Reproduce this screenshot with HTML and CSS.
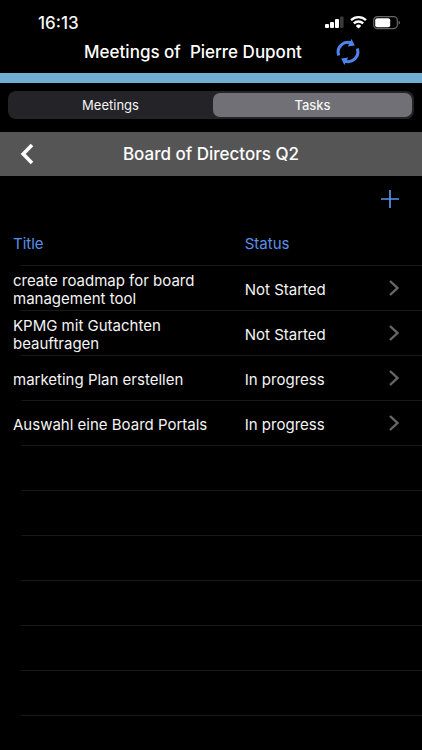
FILE: index.html
```html
<!DOCTYPE html>
<html lang="en">
<head>
<meta charset="utf-8">
<meta name="viewport" content="width=device-width, initial-scale=1">
<title>Meetings of Pierre Dupont</title>
<link rel="stylesheet" href="styles.css">
</head>
<body>
<div class="app">
  <div class="status-bar">
    <span class="clock">16:13</span>
    <div class="indicators">
      <svg width="19" height="14" viewBox="0 0 19 14" aria-hidden="true">
        <g fill="#fff"><rect x="0" y="8" width="4" height="4" rx="1"/><rect x="5" y="6" width="4" height="6" rx="1"/><rect x="10" y="3" width="4" height="9" rx="1"/></g>
        <rect x="15" y="0.5" width="3.6" height="11.5" rx="1" fill="#3a3a3a"/>
      </svg>
      <svg width="17" height="14" viewBox="0 0 17 14" aria-hidden="true">
        <g fill="none" stroke="#fff" stroke-width="2.3"><path d="M1 4.2A10.8 10.8 0 0 1 16 4.2"/><path d="M3.8 7.4A6.8 6.8 0 0 1 13.2 7.4"/></g>
        <path d="M8.5 12.6 5.8 9.9A3.9 3.9 0 0 1 11.2 9.9Z" fill="#fff"/>
      </svg>
      <svg width="28" height="14" viewBox="0 0 28 14" aria-hidden="true">
        <rect x="0.7" y="0.7" width="23.6" height="12" rx="3.6" fill="none" stroke="#666" stroke-width="1.2"/>
        <rect x="2.2" y="2.2" width="15" height="9" rx="2" fill="#fff"/>
        <path d="M25.6 4.6Q28.6 6.7 25.6 8.8Z" fill="#666"/>
      </svg>
    </div>
  </div>
  <header class="top">
    <h1 class="top-title">Meetings of&nbsp; Pierre Dupont</h1>
    <button class="icon-button" type="button" aria-label="Refresh">
      <svg width="24" height="26" viewBox="0 0 24 26" aria-hidden="true">
        <g fill="none" stroke="#4f83ec" stroke-width="3"><path d="M2.8 16.4A9.6 9.6 0 0 1 15.5 4.2"/><path d="M21.2 9.6A9.6 9.6 0 0 1 8.5 21.8"/></g>
        <g fill="#4f83ec"><path d="M15.6 0 18.8 6.6 11.8 7.4Z"/><path d="M8.4 26 5.2 19.4 12.2 18.6Z"/></g>
      </svg>
    </button>
  </header>
  <div class="accent"></div>
  <div class="segments" role="tablist" aria-label="View">
    <button class="segment" type="button" role="tab" aria-selected="false">Meetings</button>
    <button class="segment segment-active" type="button" role="tab" aria-selected="true">Tasks</button>
  </div>
  <div class="board">
    <button class="icon-button" type="button" aria-label="Back">
      <svg width="14" height="22" viewBox="0 0 14 22" aria-hidden="true"><path d="M12 2 3.2 11 12 20" fill="none" stroke="#fff" stroke-width="3.6"/></svg>
    </button>
    <h2 class="board-title">Board of Directors Q2</h2>
  </div>
  <main class="content">
    <div class="actions">
      <button class="icon-button" type="button" aria-label="Add task">
        <svg width="18" height="18" viewBox="0 0 18 18" aria-hidden="true"><path d="M9 0V18M0 9H18" stroke="#5a93ee" stroke-width="1.7"/></svg>
      </button>
    </div>
    <table class="tasks">
      <thead>
        <tr><th class="col-title" scope="col">Title</th><th scope="col">Status</th><td class="col-open"></td></tr>
      </thead>
      <tbody>
        <tr><td>create roadmap for board management tool</td><td>Not Started</td><td><button class="icon-button" type="button" aria-label="Open create roadmap for board management tool"><svg width="10" height="18" viewBox="0 0 10 18" aria-hidden="true"><path class="chevron" d="M1 2 8.4 9 1 16"/></svg></button></td></tr>
        <tr><td>KPMG mit Gutachten beauftragen</td><td>Not Started</td><td><button class="icon-button" type="button" aria-label="Open KPMG mit Gutachten beauftragen"><svg width="10" height="18" viewBox="0 0 10 18" aria-hidden="true"><path class="chevron" d="M1 2 8.4 9 1 16"/></svg></button></td></tr>
        <tr><td>marketing Plan erstellen</td><td>In progress</td><td><button class="icon-button" type="button" aria-label="Open marketing Plan erstellen"><svg width="10" height="18" viewBox="0 0 10 18" aria-hidden="true"><path class="chevron" d="M1 2 8.4 9 1 16"/></svg></button></td></tr>
        <tr><td>Auswahl eine Board Portals</td><td>In progress</td><td><button class="icon-button" type="button" aria-label="Open Auswahl eine Board Portals"><svg width="10" height="18" viewBox="0 0 10 18" aria-hidden="true"><path class="chevron" d="M1 2 8.4 9 1 16"/></svg></button></td></tr>
      </tbody>
    </table>
    <div class="empty-rows"></div>
  </main>
</div>
</body>
</html>
```
FILE: styles.css
```css
* { box-sizing: border-box; }
body {
  margin: 0;
  background: #000;
  color: #f4f4f4;
  font-family: Inter, "Liberation Sans", sans-serif;
}
.app {
  display: flex;
  flex-direction: column;
  min-height: 100vh;
}
button {
  border: 0;
  padding: 0;
  background: none;
  color: inherit;
  font: inherit;
}
.icon-button { display: inline-flex; }
svg { display: block; }

.status-bar {
  display: flex;
  justify-content: space-between;
  align-items: center;
  height: 35px;
  padding: 11px 21px 0 38px;
}
.clock {
  font-size: 17px;
  font-weight: 500;
  line-height: 20px;
}
.indicators { display: flex; gap: 6px; }

.top {
  display: flex;
  justify-content: center;
  align-items: center;
  gap: 34px;
  height: 38px;
  padding: 0 0 4px 22px;
}
.top-title, .board-title {
  margin: 0;
  color: #fff;
  font-size: 17px;
  font-weight: 500;
  line-height: 24px;
  white-space: nowrap;
}
.accent { height: 10px; background: #70aed4; }

.segments {
  display: grid;
  grid-template-columns: 1fr 1fr;
  height: 28px;
  margin: 8px 8px 13px;
  padding: 2px;
  border-radius: 8px;
  background: #242328;
}
.segment {
  border-radius: 7px;
  font-size: 13px;
  line-height: 16px;
}
.segment-active { margin-left: 2px; background: #717076; font-weight: 500; }

.board {
  display: grid;
  grid-template-columns: 14px 1fr 14px;
  align-items: center;
  height: 44px;
  padding: 0 20px;
  background: #555;
}
.board-title { text-align: center; }

.content {
  display: flex;
  flex-direction: column;
  flex: 1;
}
.actions {
  display: flex;
  justify-content: flex-end;
  padding: 14px 23px 13px;
}
.tasks {
  width: 100%;
  border-collapse: collapse;
  table-layout: fixed;
  font-size: 15px;
  line-height: 18px;
}
.tasks tr {
  height: 45px;
  background: linear-gradient(#18181a, #18181a) 21px 100% / 100% 1px no-repeat;
}
.tasks th, .tasks td {
  padding: 3px 0 0;
  text-align: left;
  vertical-align: middle;
}
.tasks th { padding-top: 0; color: #5e8fe6; font-weight: 400; }
.tasks th:first-child, .tasks td:first-child { padding-left: 13px; padding-right: 24px; }
.tasks .col-title { width: 58%; }
.tasks .col-open { width: 33px; }
.chevron { fill: none; stroke: #666; stroke-width: 2.4; }

.empty-rows {
  flex: 1;
  background: repeating-linear-gradient(transparent 0 44px, #18181a 44px 45px);
  margin-left: 21px;
}
```
